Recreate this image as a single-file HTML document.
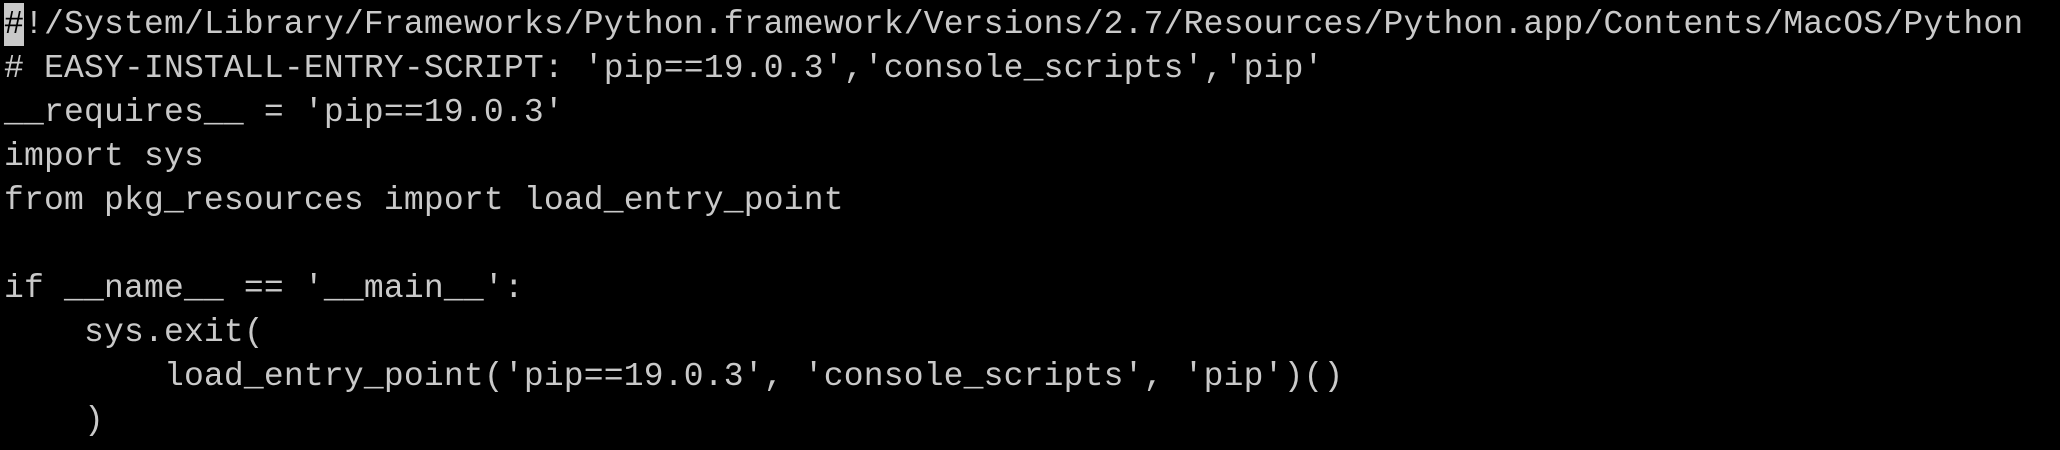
<!DOCTYPE html>
<html><head><meta charset="utf-8"><style>
html,body{margin:0;padding:0;background:#000;width:2060px;height:450px;overflow:hidden}
pre{margin:0;position:absolute;left:4px;top:3px;font-family:"Liberation Mono",monospace;font-size:33px;letter-spacing:0.19px;line-height:44px;color:#c9c9c9;white-space:pre}
.cur{background:#c9c9c9;color:#000;display:inline-block;height:43px;vertical-align:top}
</style></head><body>
<pre><span class="cur">#</span>!/System/Library/Frameworks/Python.framework/Versions/2.7/Resources/Python.app/Contents/MacOS/Python
# EASY-INSTALL-ENTRY-SCRIPT: 'pip==19.0.3','console_scripts','pip'
__requires__ = 'pip==19.0.3'
import sys
from pkg_resources import load_entry_point

if __name__ == '__main__':
    sys.exit(
        load_entry_point('pip==19.0.3', 'console_scripts', 'pip')()
    )</pre>
</body></html>
